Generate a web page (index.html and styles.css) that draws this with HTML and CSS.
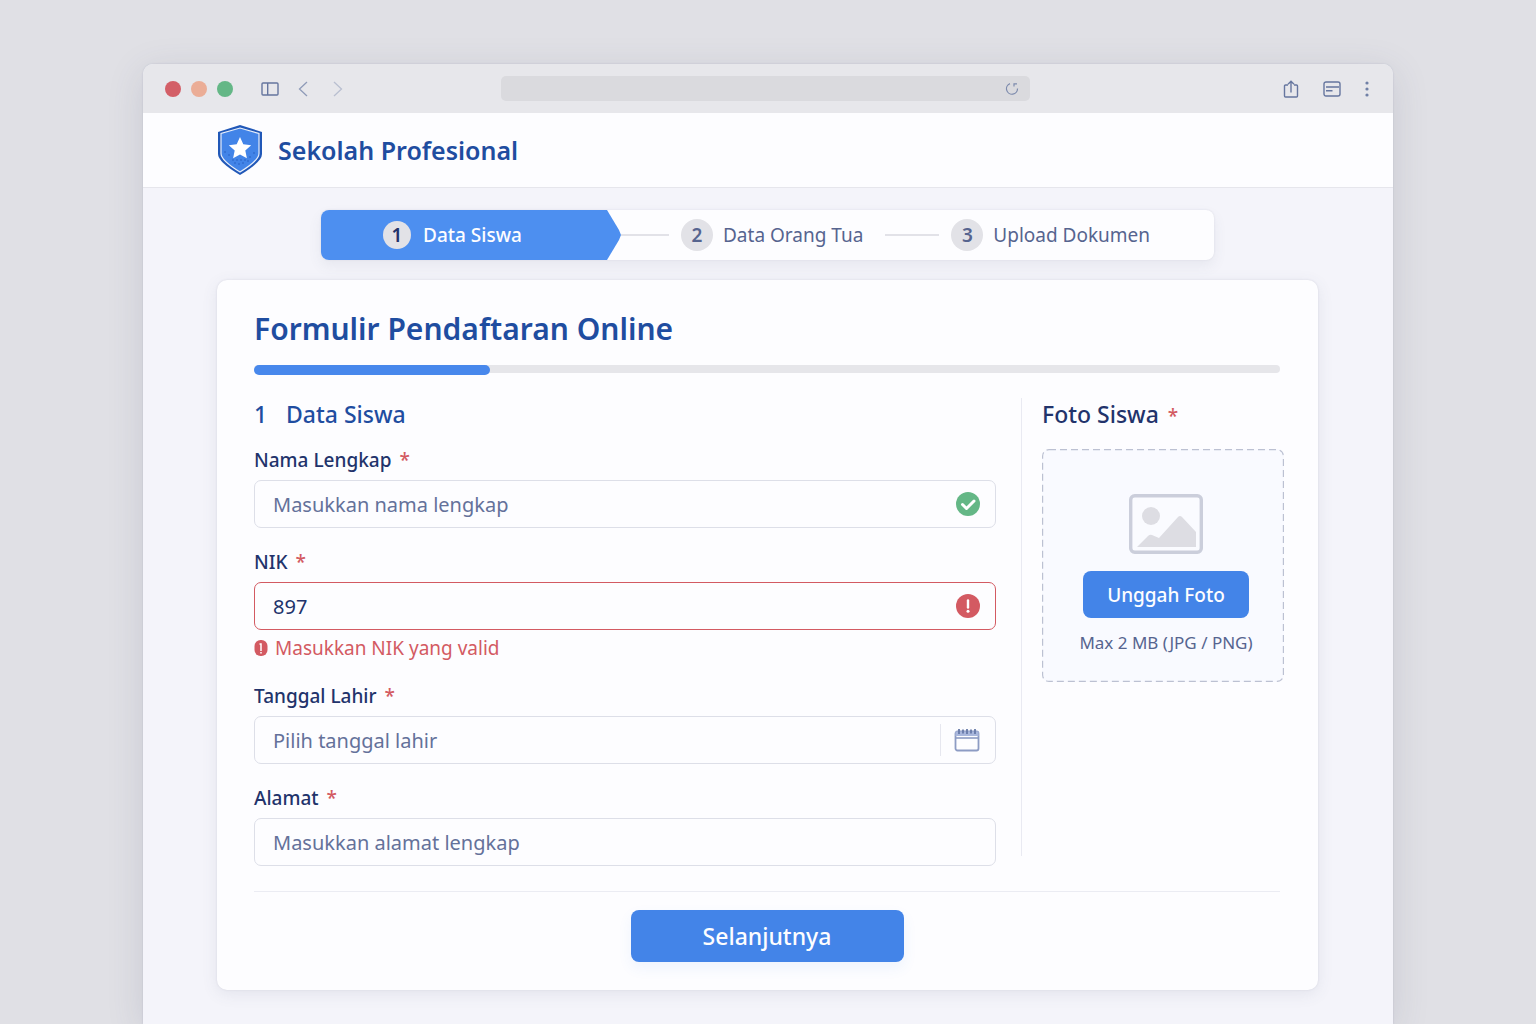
FILE: index.html
```html
<!DOCTYPE html>
<html lang="id">
<head>
  <meta charset="UTF-8" />
  <meta name="viewport" content="width=device-width, initial-scale=1.0" />
  <title>Sekolah Profesional</title>
  <link rel="stylesheet" href="styles.css">
</head>
<body>
  <div class="window">
    <div class="toolbar">
      <div class="dots">
        <span class="dot red"></span>
        <span class="dot orange"></span>
        <span class="dot green"></span>
      </div>
      <div class="nav">
        <button type="button" aria-label="Sidebar">
          <svg width="18" height="14" viewBox="0 0 18 14" fill="none" stroke="#66769f" stroke-width="1.4"><rect x="1" y="1" width="16" height="12" rx="1"/><path d="M6.700 1v12"/></svg>
        </button>
        <button type="button" aria-label="Kembali">
          <svg width="10" height="16" viewBox="0 0 10 16" fill="none" stroke="#8f9bb8" stroke-width="1.3"><path d="M9 1L1.500 8L9 15"/></svg>
        </button>
        <button type="button" aria-label="Maju">
          <svg width="10" height="16" viewBox="0 0 10 16" fill="none" stroke="#b9bfd0" stroke-width="1.3"><path d="M1 1l7.500 7L1 15"/></svg>
        </button>
      </div>
      <div class="address">
        <button type="button" aria-label="Muat ulang">
          <svg width="14" height="14" viewBox="0 0 14 14" fill="none" stroke="#7d8bad" stroke-width="1.2"><path d="M5 1.600A5.500 5.500 0 1 0 12.500 6.500"/><path d="M9 4.500V1.800h3"/></svg>
        </button>
      </div>
      <div class="tools">
        <button type="button" aria-label="Bagikan">
          <svg width="16" height="18" viewBox="0 0 16 18" fill="none" stroke="#66769f" stroke-width="1.4"><path d="M5 5H2.500q-1 0-1 1V16q0 1 1 1h11q1 0 1-1V6q0-1-1-1H11"/><path d="M8 12.500V1.500M5 4.200L8 1.200l3 3"/></svg>
        </button>
        <button type="button" aria-label="Catatan">
          <svg width="18" height="16" viewBox="0 0 18 16" fill="none" stroke="#66769f" stroke-width="1.4"><rect x="1" y="1" width="16" height="14" rx="2"/><path d="M3 6h13M3 9.700H9.500"/></svg>
        </button>
        <button type="button" aria-label="Menu">
          <svg width="4" height="16" viewBox="0 0 4 16" fill="#7080a6"><circle cx="2" cy="2" r="1.600"/><circle cx="2" cy="8" r="1.600"/><circle cx="2" cy="14" r="1.600"/></svg>
        </button>
      </div>
    </div>

    <header class="header">
      <svg width="46" height="52" viewBox="0 0 46 52">
        <path d="M23 1L45 8V30Q45 38 23 51Q1 38 1 30V8Z" fill="#2158b8"/>
        <path d="M23 4L42 9.500V29.500Q42 36.500 23 48Q4 36.500 4 29.500V9.500Z" fill="#4284e8" stroke="#e8effb" stroke-width="1.2"/>
        <g fill="#2158b8"><circle cx="8" cy="28" r=".7"/><circle cx="12" cy="31" r=".7"/><circle cx="16" cy="36" r=".7"/><circle cx="20" cy="36" r=".7"/><circle cx="24" cy="36" r=".7"/><circle cx="28" cy="36" r=".7"/><circle cx="33" cy="33" r=".7"/><circle cx="37" cy="29" r=".7"/><circle cx="18" cy="39" r=".7"/><circle cx="22" cy="40" r=".7"/><circle cx="26" cy="39" r=".7"/><circle cx="31" cy="37" r=".7"/></g>
        <path d="M23 13l3.300 7.300 7.900.9-5.900 5.300 1.600 7.800L23 30.400l-6.900 3.900 1.600-7.800-5.900-5.300 7.900-.9z" fill="#fff"/>
      </svg>
      <span class="brand">Sekolah Profesional</span>
    </header>

    <main>
      <ol class="stepper">
        <li class="step active"><span class="num">1</span>Data Siswa</li>
        <li class="step"><span class="num">2</span>Data Orang Tua</li>
        <li class="step"><span class="num">3</span>Upload Dokumen</li>
      </ol>

      <form class="card">
        <h1>Formulir Pendaftaran Online</h1>
        <div class="progress"><div class="progress-bar" style="width: 23%"></div></div>

        <div class="columns">
          <section class="fields">
            <h2><span>1</span>Data Siswa</h2>

            <div class="field">
              <label for="nama">Nama Lengkap <span class="req">*</span></label>
              <div class="box">
                <input type="text" id="nama" placeholder="Masukkan nama lengkap">
                <svg width="24" height="24" viewBox="0 0 24 24"><circle cx="12" cy="12" r="12" fill="#64b786"/><path d="M6.500 12.500l4 4L18 9" fill="none" stroke="#fff" stroke-width="3" stroke-linecap="round" stroke-linejoin="round"/></svg>
              </div>
            </div>

            <div class="field">
              <label for="nik">NIK <span class="req">*</span></label>
              <div class="box invalid">
                <input type="text" id="nik" value="897">
                <svg width="24" height="24" viewBox="0 0 24 24"><circle cx="12" cy="12" r="12" fill="#d35a62"/><path d="M12 6.500v7" stroke="#fff" stroke-width="2.400" stroke-linecap="round"/><circle cx="12" cy="17.300" r="1.500" fill="#fff"/></svg>
              </div>
              <p class="error">
                <svg width="14" height="16" viewBox="0 0 14 16"><rect x=".5" width="13" height="16" rx="6" fill="#d35a62"/><path d="M5.500 4H7v7M7 12v1.500" fill="none" stroke="#fff" stroke-width="1.500"/></svg>
                Masukkan NIK yang valid
              </p>
            </div>

            <div class="field">
              <label for="tanggal">Tanggal Lahir <span class="req">*</span></label>
              <div class="box">
                <input type="text" id="tanggal" placeholder="Pilih tanggal lahir">
                <button type="button" class="calendar" aria-label="Pilih tanggal">
                  <svg width="26" height="24" viewBox="0 0 26 24"><rect x="1.500" y="3.500" width="23" height="19" rx="2" fill="#fdfdff" stroke="#8d9cc4" stroke-width="1.800"/><path d="M1.500 3.500h23V8h-23z" fill="#a9b7dc"/><path d="M1.500 10h23" stroke="#8d9cc4" stroke-width="1.600"/><path d="M5 1v5M9 1.500v4M13 1v5M17 1.500v4M21 1v5" stroke="#687aa8" stroke-width="1.800"/></svg>
                </button>
              </div>
            </div>

            <div class="field">
              <label for="alamat">Alamat <span class="req">*</span></label>
              <div class="box">
                <input type="text" id="alamat" placeholder="Masukkan alamat lengkap">
              </div>
            </div>
          </section>

          <section class="photo">
            <h2>Foto Siswa <span class="req">*</span></h2>
            <div class="dropzone">
              <svg class="outline" width="100%" height="100%"><rect width="100%" height="100%" rx="7" fill="#f9faff" stroke="#bcc1d2" stroke-width="2.400" stroke-dasharray="7 4"/></svg>
              <svg class="picture" width="74" height="60" viewBox="0 0 74 60"><rect x="1.700" y="1.700" width="70.600" height="56.600" rx="4" fill="#fafbff" stroke="#cbcedb" stroke-width="3.400"/><circle cx="22" cy="22" r="9" fill="#dddde3"/><path d="M8 53L19 42q2-2 4-1l7 3L49 23q2-2 4 0L67 38V53Z" fill="#dddde3"/></svg>
              <button type="button" class="btn upload">Unggah Foto</button>
              <p>Max 2 MB (JPG / PNG)</p>
            </div>
          </section>
        </div>

        <div class="actions">
          <button type="submit" class="btn next">Selanjutnya</button>
        </div>
      </form>
    </main>
  </div>
</body>
</html>
```
FILE: styles.css
```css
* {
  margin: 0;
  padding: 0;
  box-sizing: border-box;
}

body {
  font-family: "Noto Sans", "Open Sans", sans-serif;
  font-size: 19px;
  line-height: 28px;
  color: #22336b;
  background: #e0e0e5;
  padding: 64px 24px 0;
}

button {
  font: inherit;
  border: none;
  background: none;
  cursor: pointer;
}

svg {
  display: block;
  flex-shrink: 0;
}

.window {
  max-width: 1250px;
  min-height: calc(100vh - 64px);
  margin: 0 auto;
  background: #f4f4fa;
  border-radius: 10px 10px 0 0;
  box-shadow: 0 0 2px #b9bccb, 0 8px 36px rgba(70, 75, 110, 0.15);
  overflow: hidden;
}

/* browser bar */
.toolbar {
  display: flex;
  align-items: center;
  height: 49px;
  padding: 0 24px 0 22px;
  background: #e7e7eb;
}

.dots, .nav, .tools {
  display: flex;
  align-items: center;
}

.dots {
  gap: 10px;
}

.dot {
  width: 16px;
  height: 16px;
  border-radius: 50%;
}

.red { background: #d35f67; }
.orange { background: #ebad96; }
.green { background: #64b786; }

.nav {
  gap: 19px;
  margin-left: 28px;
}

.nav button:last-child {
  margin-left: 6px;
}

.address {
  display: flex;
  justify-content: flex-end;
  align-items: center;
  flex: 0 1 529px;
  height: 25px;
  margin: 0 auto 0 158px;
  padding-right: 11px;
  background: #dadade;
  border-radius: 5px;
}

.tools {
  gap: 24px;
}

/* school header */
.header {
  display: flex;
  align-items: center;
  gap: 15px;
  height: 75px;
  padding: 0 74px;
  background: #fdfdff;
  border-bottom: 1px solid #e6e6ec;
}

.brand {
  font-size: 25px;
  font-weight: 600;
  color: #1f4da0;
}

main {
  padding: 22px 75px 34px 74px;
}

/* steps */
.stepper {
  display: flex;
  align-items: center;
  max-width: 893px;
  height: 50px;
  margin: 0 auto 20px;
  list-style: none;
  background: #fdfdff;
  border-radius: 8px;
  box-shadow: 0 0 2px #d9d9e2, 0 6px 14px rgba(80, 90, 120, 0.08);
}

.step {
  display: flex;
  align-items: center;
  color: #56648f;
}

.step + .step::before {
  content: "";
  width: 48px;
  height: 2px;
  margin-right: 12px;
  background: #e2e2e8;
}

.step + .step + .step::before {
  width: 54px;
  margin-left: 22px;
}

.num {
  width: 32px;
  height: 32px;
  margin-right: 10px;
  line-height: 32px;
  text-align: center;
  font-weight: 600;
  color: #56648f;
  background: #e2e2e7;
  border-radius: 50%;
}

.active {
  width: 300px;
  height: 50px;
  padding-left: 62px;
  font-weight: 500;
  color: #fdfdff;
  background: #4d8ff0;
  border-radius: 8px 0 0 8px;
  clip-path: polygon(0 0, 286px 0, 298px 20px, 300px 25px, 298px 30px, 286px 100%, 0 100%);
}

.active .num {
  width: 28px;
  height: 28px;
  margin-right: 12px;
  line-height: 28px;
  color: #22336b;
}

/* form card */
.card {
  padding: 27px 34px 28px 37px;
  background: #fdfdff;
  border-radius: 10px;
  box-shadow: 0 0 2px #d5d5df, 0 4px 16px rgba(80, 90, 120, 0.1);
}

h1 {
  font-size: 30px;
  font-weight: 600;
  line-height: 44px;
  color: #1f4da0;
}

.progress {
  height: 8px;
  margin: 14px 4px 25px 0;
  background: #e6e6ea;
  border-radius: 5px;
}

.progress-bar {
  height: 10px;
  background: #4888ec;
  border-radius: 5px;
}

.columns {
  display: flex;
}

.fields {
  flex: 1;
  padding-right: 25px;
}

.photo {
  width: 263px;
  padding-left: 20px;
  margin-bottom: 10px;
  border-left: 1px solid #e9eaf2;
}

h2 {
  margin-bottom: 16px;
  font-size: 23px;
  font-weight: 500;
  line-height: 32px;
}

.fields h2 {
  color: #1f4da0;
}

.fields h2 span {
  display: inline-block;
  width: 32px;
}

.req {
  margin-left: 3px;
  font-size: 19px;
  color: #d35a62;
}

.field {
  margin-bottom: 20px;
}

.field:last-child {
  margin-bottom: 0;
}

label {
  display: block;
  margin-bottom: 6px;
  font-weight: 500;
}

.box {
  display: flex;
  align-items: center;
  height: 48px;
  padding: 0 15px 0 18px;
  border: 1px solid #dddfe8;
  border-radius: 7px;
}

.box input {
  flex: 1;
  min-width: 0;
  height: 100%;
  font: inherit;
  font-size: 20px;
  color: #22336b;
  background: none;
  border: none;
  outline: none;
}

.box input::placeholder {
  color: #64719a;
  opacity: 1;
}

.box.invalid {
  border-color: #d35a62;
}

.error {
  display: flex;
  align-items: center;
  gap: 7px;
  margin-top: 4px;
  color: #d35a62;
}

.calendar {
  padding: 4px 0 4px 13px;
  border-left: 1px solid #e6e7ef;
}

.dropzone {
  position: relative;
  display: flex;
  flex-direction: column;
  align-items: center;
  height: 233px;
  margin-top: 17px;
  padding: 45px 0 0 6px;
  border-radius: 7px;
  overflow: hidden;
}

/* dashed frame behind the upload controls */
.outline {
  position: absolute;
  top: 0;
  left: 0;
}

.picture, .upload, .dropzone p {
  z-index: 1;
}

.dropzone p {
  margin-top: 11px;
  font-size: 17px;
  color: #56648f;
}

.btn {
  font-weight: 500;
  color: #fdfdff;
  background: #4384e8;
  border-radius: 8px;
}

.upload {
  width: 166px;
  height: 47px;
  margin-top: 17px;
}

.actions {
  margin: 25px 4px 0 0;
  padding-top: 18px;
  border-top: 1px solid #ebecf3;
  text-align: center;
}

.next {
  width: 273px;
  height: 52px;
  font-size: 23px;
  box-shadow: 0 6px 14px rgba(67, 132, 232, 0.08);
}
```
